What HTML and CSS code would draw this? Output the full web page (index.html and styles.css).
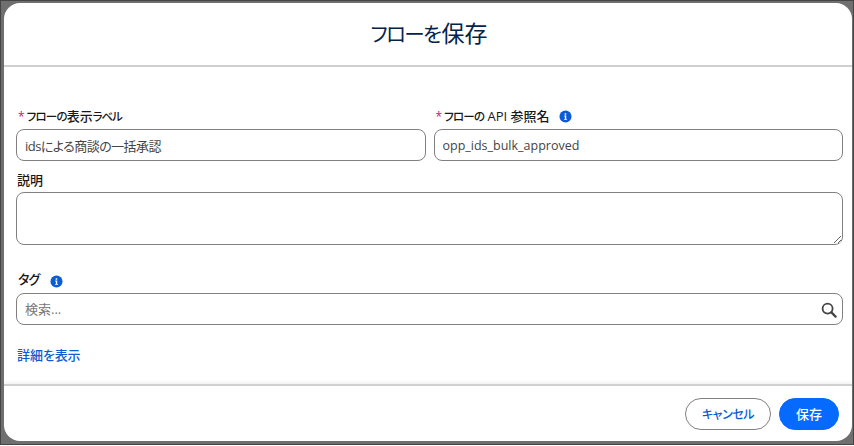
FILE: index.html
```html
<!DOCTYPE html>
<html lang="ja">
<head>
<meta charset="utf-8">
<title>フローを保存</title>
<link rel="stylesheet" href="styles.css">
</head>
<body>
<div class="frame">
  <section class="modal">
    <header class="modal-header"><h1><span class="kana-title">フローを</span>保存</h1></header>
    <div class="modal-body">
      <div class="row">
        <div class="field">
          <label class="label label-top"><span class="req">*</span><span class="kana">フローの</span>表示<span class="kana kana-tight">ラベル</span></label>
          <input class="input input-mixed" type="text" value="idsによる商談の一括承認">
        </div>
        <div class="field">
          <label class="label label-top"><span class="req">*</span><span class="kana">フローの</span>&nbsp;API 参照名<svg class="info" viewBox="0 0 14 14"><circle cx="7" cy="7" r="6.5" fill="#0b5cd5"/><path d="M5.6 6h2.2v3.6h.9v1H5.4v-1h.9V7h-.7zM6.1 3.4h1.7v1.6H6.1z" fill="#fff"/></svg></label>
          <input class="input input-latin" type="text" value="opp_ids_bulk_approved">
        </div>
      </div>
      <div class="field desc">
        <label class="label label-plain">説明</label>
        <textarea class="textarea"></textarea>
      </div>
      <div class="field tags">
        <label class="label label-plain"><span class="kana-tag">タグ</span><svg class="info" viewBox="0 0 14 14"><circle cx="7" cy="7" r="6.5" fill="#0b5cd5"/><path d="M5.6 6h2.2v3.6h.9v1H5.4v-1h.9V7h-.7zM6.1 3.4h1.7v1.6H6.1z" fill="#fff"/></svg></label>
        <div class="search">
          <input class="input" type="text" placeholder="検索...">
          <svg class="search-icon" viewBox="0 0 16 16"><circle cx="6.6" cy="6.6" r="5" fill="none" stroke="#444" stroke-width="1.8"/><path d="M10.4 10.4l4.2 4.2" stroke="#444" stroke-width="2.2" stroke-linecap="round"/></svg>
        </div>
      </div>
      <a class="more" href="#">詳細を表示</a>
    </div>
    <footer class="modal-footer">
      <button class="btn btn-neutral">キャンセル</button>
      <button class="btn btn-brand">保存</button>
    </footer>
  </section>
</div>
</body>
</html>
```
FILE: styles.css
```css
* { box-sizing: border-box; }
html, body { margin: 0; height: 100%; }
body {
  width: 854px;
  height: 446px;
  overflow: hidden;
  background: #fff;
  font-family: "Open Sans", "Noto Sans CJK JP", sans-serif;
  font-feature-settings: "palt";
  color: #181818;
}
.frame {
  width: 854px;
  height: 445px;
  background: #6f6f6f;
  border: 1px solid #444;
  padding: 2px 1px 3px 3px;
}
.modal {
  height: 100%;
  background: #fff;
  border-radius: 16px;
  display: flex;
  flex-direction: column;
  overflow: hidden;
}
.modal-header {
  height: 64px;
  flex: none;
  border-bottom: 2px solid #d0d0d0;
  display: flex;
  align-items: center;
  justify-content: center;
  padding-bottom: 4px;
}
.modal-header h1 {
  margin: 0;
  font-size: 23px;
  font-weight: 400;
  color: #03234d;
  padding-left: 2px;
}
.kana-title { font-size: 20.5px; letter-spacing: -1.6px; margin-right: 1px; }
.modal-body {
  flex: 1;
  min-height: 0;
  padding: 41px 9px 0 12px;
  display: flex;
  flex-direction: column;
}
.row { display: flex; gap: 8px; }
.row .field { flex: 1; min-width: 0; }
.field { display: flex; flex-direction: column; }
.label {
  height: 21px;
  font-size: 13px;
  font-weight: 500;
  line-height: 17px;
  display: flex;
  align-items: center;
  padding-bottom: 2px;
  color: #181818;
  white-space: pre;
}
.label-top { padding-bottom: 4px; }
.label-plain { padding-left: 1px; }
.kana { font-size: 11.5px; letter-spacing: -0.8px; }
.kana-tight { letter-spacing: -1.1px; }
.kana-tag { letter-spacing: -1px; padding-left: 1px; margin-bottom: 4px; }
.req { color: #b5236b; margin: 0 2px 0 2px; font-size: 12px; }
.info { width: 13px; height: 13px; margin-left: 9px; flex: none; }
.input {
  width: 100%;
  height: 32px;
  padding: 0 8px;
  border: 1px solid #808080;
  border-radius: 8px;
  background: #fff;
  font: inherit;
  font-size: 13px;
  color: #444;
  outline: none;
}
.input-mixed { letter-spacing: -0.55px; }
.input-latin { font-size: 12.5px; }
.input::placeholder { color: #777; opacity: 1; }
.desc { margin-top: 10px; }
.textarea {
  width: 100%;
  height: 53px;
  border: 1px solid #808080;
  border-radius: 8px;
  display: block;
  outline: none;
}
.tags { margin-top: 27px; }
.tags .info { margin-left: 11px; }
.search { position: relative; }
.search-icon { position: absolute; right: 6px; top: 9px; width: 16px; height: 16px; }
.more {
  margin-top: 20px;
  font-size: 13px;
  font-weight: 500;
  color: #0b5cd5;
  text-decoration: none;
  padding-left: 1px;
  letter-spacing: -0.1px;
}
.modal-footer {
  flex: none;
  height: 57px;
  border-top: 2px solid #d0d0d0;
  box-shadow: 0 -2px 3px rgba(0,0,0,.05);
  display: flex;
  align-items: center;
  justify-content: flex-end;
  gap: 8px;
  padding: 0 13px 0 0;
}
.btn {
  height: 32px;
  border-radius: 16px;
  font: inherit;
  font-size: 13px;
  font-weight: 500;
  padding: 0;
}
.btn-neutral { width: 86px; background: #fff; border: 1px solid #808080; color: #0b5cd5; font-size: 12px; letter-spacing: -0.4px; }
.btn-brand { width: 60px; background: #066afe; border: 1px solid #066afe; color: #fff; }
```
